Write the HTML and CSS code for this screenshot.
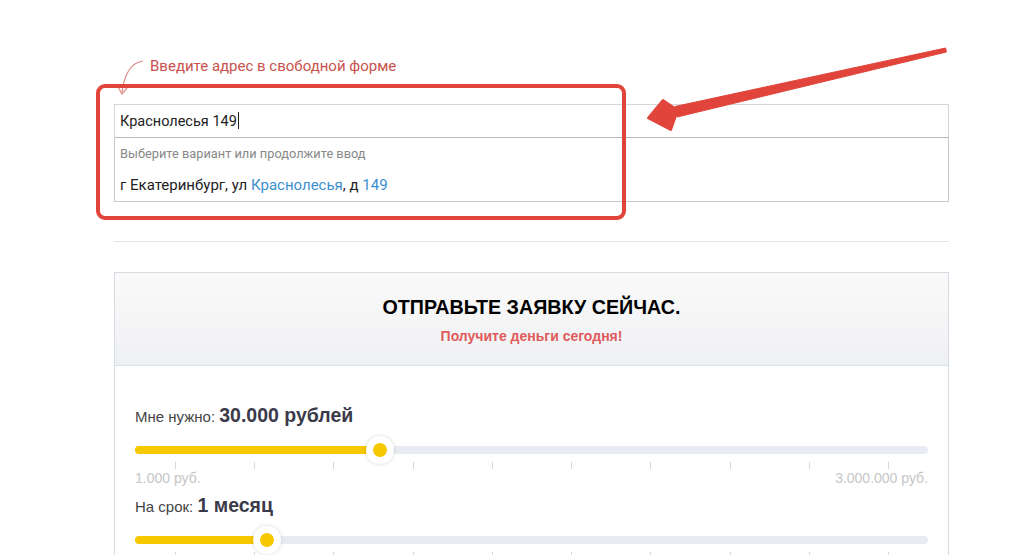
FILE: index.html
```html
<!DOCTYPE html>
<html lang="ru">
<head>
    <meta charset="UTF-8">
    <title>Заявка</title>
    <link rel="stylesheet" href="styles.css">
</head>
<body>
<div class="page">
    <!-- Подсказка -->
    <div class="hint">Введите адрес в свободной форме</div>

    <!-- Поле адреса с подсказками -->
    <div class="address">
        <div class="address-input">Краснолесья 149<span class="caret"></span></div>
        <div class="suggest">
            <div class="suggest-hint">Выберите вариант или продолжите ввод</div>
            <div class="suggest-item">г Екатеринбург, ул <span class="hl">Краснолесья</span>, д <span class="hl">149</span></div>
        </div>
    </div>

    <div class="divider"></div>

    <!-- Форма заявки -->
    <div class="card">
        <div class="card-head">
            <h2>ОТПРАВЬТЕ ЗАЯВКУ СЕЙЧАС.</h2>
            <p>Получите деньги сегодня!</p>
        </div>
        <div class="card-body">
            <div class="field-label">Мне нужно: <b>30.000 рублей</b></div>
            <div class="slider">
                <div class="track">
                    <div class="fill" style="width: 30.9%"></div>
                    <div class="knob" style="left: 30.9%"></div>
                </div>
            </div>
            <div class="ticks">
                <span></span><span></span><span></span><span></span><span></span>
                <span></span><span></span><span></span><span></span><span></span>
            </div>
            <div class="range"><span>1.000 руб.</span><span>3.000.000 руб.</span></div>

            <div class="field-label second">На срок: <b>1 месяц</b></div>
            <div class="slider">
                <div class="track">
                    <div class="fill" style="width: 16.6%"></div>
                    <div class="knob" style="left: 16.6%"></div>
                </div>
            </div>
            <div class="ticks">
                <span></span><span></span><span></span><span></span><span></span>
                <span></span><span></span><span></span><span></span><span></span>
            </div>
        </div>
    </div>
</div>

<!-- Пометки поверх скриншота -->
<svg class="markup" width="1024" height="555" viewBox="0 0 1024 555">
    <path d="M143 61 Q126 63 122 92" fill="none" stroke="#d98a86" stroke-width="1.2"/>
    <path d="M118 87 L122 94 L127 88" fill="none" stroke="#d98a86" stroke-width="1.2"/>
    <rect x="98" y="86" width="526" height="132" rx="7" fill="none" stroke="#e0443a" stroke-width="4"/>
    <polygon points="946.4,52 945.6,48 674.9,106.5 677.1,117" fill="#e0443a" stroke="#e0443a" stroke-width="1" stroke-linejoin="round"/>
    <polygon points="648,118 663,100 678,110 671,130" fill="#e0443a" stroke="#e0443a" stroke-width="2" stroke-linejoin="round"/>
</svg>
</body>
</html>
```

FILE: styles.css
```css
/* General */
body {
    margin: 0;
    background: #fff;
    font-family: Roboto, "Liberation Sans", Arial, sans-serif;
    color: #222;
    height: 555px;
    overflow: hidden;
    position: relative;
}

.page {
    width: 835px;
    margin-left: 114px;
    padding-top: 57px;
}

/* Подсказка */
.hint {
    margin-left: 36px;
    font-size: 15px;
    line-height: 18px;
    color: #c9524c;
    margin-bottom: 29px;
}

/* Поле адреса */
.address-input {
    height: 32px;
    border: 1px solid #d6d6d6;
    border-bottom-color: #b9b9b9;
    padding-left: 5px;
    font-size: 14.5px;
    line-height: 34px;
    color: #222;
}

.caret {
    display: inline-block;
    width: 1px;
    height: 17px;
    background: #222;
    vertical-align: -3px;
    margin-left: 1px;
}

.suggest {
    border: 1px solid #c9c9c9;
    border-top: none;
    padding: 8px 5px 7px;
}

.suggest-hint {
    font-size: 12.8px;
    line-height: 16px;
    color: #888;
}

.suggest-item {
    margin-top: 14px;
    font-size: 15px;
    line-height: 18px;
    color: #222;
}

.hl {
    color: #3a8fd0;
}

.divider {
    height: 1px;
    background: #e3e3e3;
    margin: 39px 0 30px;
}

/* Карточка формы */
.card {
    border: 1px solid #d6dae2;
    font-family: "Liberation Sans", Arial, sans-serif;
}

.card-head {
    height: 93px;
    padding-top: 23px;
    box-sizing: border-box;
    background: linear-gradient(#fafafa, #eff0f2);
    border-bottom: 1px solid #dbe1e8;
    text-align: center;
}

.card-head h2 {
    margin: 0;
    font-size: 19.7px;
    line-height: 22px;
    color: #000;
}

.card-head p {
    margin: 10px 0 0;
    font-size: 14px;
    line-height: 16px;
    font-weight: bold;
    color: #e05a5c;
}

.card-body {
    padding: 38px 20px 0;
}

.field-label {
    font-size: 15px;
    line-height: 22px;
    color: #444;
}

.field-label b {
    font-size: 19.5px;
    color: #3b3a4a;
}

.field-label.second {
    margin-top: 8px;
}

/* Слайдер */
.slider {
    height: 24px;
    margin-top: 10px;
    display: flex;
    align-items: center;
}

.track {
    position: relative;
    width: 100%;
    height: 8px;
    border-radius: 4px;
    background: #e9ebf3;
}

.fill {
    height: 100%;
    border-radius: 4px;
    background: #f5c800;
}

.knob {
    position: absolute;
    top: 50%;
    width: 14px;
    height: 14px;
    margin: -14px 0 0 -14px;
    border: 7px solid #fff;
    border-radius: 50%;
    background: #f5c800;
    box-shadow: 0 0 4px #00000026;
}

.ticks {
    display: flex;
    justify-content: space-between;
    padding: 0 39px 0 40px;
    height: 7px;
}

.ticks span {
    width: 1px;
    height: 7px;
    background: #d8d8d8;
}

.range {
    display: flex;
    justify-content: space-between;
    margin-top: 1px;
    font-size: 14px;
    line-height: 16px;
    color: #c6c6c6;
}

/* Пометки */
.markup {
    position: absolute;
    top: 0;
    left: 0;
    pointer-events: none;
}
```
